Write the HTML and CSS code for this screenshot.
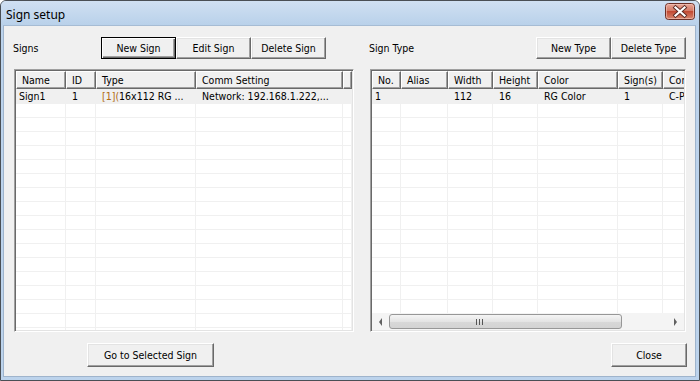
FILE: index.html
```html
<!DOCTYPE html>
<html lang="en">
<head>
  <meta charset="UTF-8" />
  <title>Sign setup</title>
  <link rel="stylesheet" href="styles.css">
</head>
<body>
  <div class="window">
    <div class="titlebar">
      <span class="title">Sign setup</span>
      <span class="close-btn">
        <svg width="30" height="17" viewBox="0 0 30 17">
          <defs>
            <linearGradient id="redFace" x1="0" y1="0" x2="0" y2="1">
              <stop offset="0" stop-color="#e9a99a"/>
              <stop offset="0.45" stop-color="#d47a66"/>
              <stop offset="0.5" stop-color="#c24a33"/>
              <stop offset="1" stop-color="#d98a72"/>
            </linearGradient>
          </defs>
          <rect x="0.5" y="0.5" width="29" height="16" rx="3" fill="url(#redFace)" stroke="#6b2f26"/>
          <rect x="1.5" y="1.5" width="27" height="14" rx="2" fill="none" stroke="#f3c9bf" stroke-opacity="0.6"/>
          <path d="M10.5 4.5 L19.5 12.5 M19.5 4.5 L10.5 12.5" stroke="#5a2a24" stroke-width="4" stroke-linecap="square"/>
          <path d="M10.5 4.5 L19.5 12.5 M19.5 4.5 L10.5 12.5" stroke="#fff" stroke-width="2.2" stroke-linecap="square"/>
        </svg>
      </span>
    </div>

    <div class="client">
      <section class="panel">
        <div class="toolbar">
          <span class="label label-signs">Signs</span>
          <button class="btn btn-default">New Sign</button>
          <button class="btn">Edit Sign</button>
          <button class="btn">Delete Sign</button>
        </div>
        <div class="listview">
          <div class="list-body">
            <table class="grid grid-signs">
              <colgroup>
                <col style="width:50px"><col style="width:30px"><col style="width:100px"><col style="width:147px"><col style="width:9px">
              </colgroup>
              <thead>
                <tr><th>Name</th><th>ID</th><th>Type</th><th>Comm Setting</th><th class="filler"></th></tr>
              </thead>
              <tbody id="signRows">
                <tr class="selected"><td class="first">Sign1</td><td>1</td><td><span class="tag">[1](</span>16x112 RG ...</td><td>Network: 192.168.1.222,...</td><td></td></tr>
              </tbody>
            </table>
          </div>
        </div>
        <div class="footer footer-left">
          <button class="btn btn-wide">Go to Selected Sign</button>
        </div>
      </section>

      <section class="panel">
        <div class="toolbar">
          <span class="label label-grow">Sign Type</span>
          <button class="btn">New Type</button>
          <button class="btn">Delete Type</button>
        </div>
        <div class="listview">
          <div class="list-body">
            <table class="grid grid-types">
              <colgroup>
                <col style="width:29px"><col style="width:47px"><col style="width:45px"><col style="width:45px"><col style="width:80px"><col style="width:45px"><col style="width:60px">
              </colgroup>
              <thead>
                <tr><th>No.</th><th>Alias</th><th>Width</th><th>Height</th><th>Color</th><th>Sign(s)</th><th>Comm</th></tr>
              </thead>
              <tbody id="typeRows">
                <tr class="selected"><td class="first">1</td><td></td><td>112</td><td>16</td><td>RG Color</td><td>1</td><td>C-Power</td></tr>
              </tbody>
            </table>
          </div>
          <div class="hscroll">
            <span class="arrow arrow-left"></span>
            <span class="track">
              <span class="thumb"><span class="grip"></span></span>
            </span>
            <span class="arrow arrow-right"></span>
          </div>
        </div>
        <div class="footer footer-right">
          <button class="btn btn-close">Close</button>
        </div>
      </section>
    </div>
  </div>

  <script>
    // pad both lists with empty grid rows
    function fillRows(id, cols, count) {
      const body = document.getElementById(id);
      for (let i = 0; i < count; i++) {
        const tr = document.createElement('tr');
        for (let c = 0; c < cols; c++) tr.appendChild(document.createElement('td'));
        body.appendChild(tr);
      }
    }
    fillRows('signRows', 5, 17);
    fillRows('typeRows', 7, 17);
  </script>
</body>
</html>
```

FILE: styles.css
```css
* {
  box-sizing: border-box;
  margin: 0;
  padding: 0;
}

body {
  width: 700px;
  height: 381px;
  overflow: hidden;
  background: #fff;
  font-family: "DejaVu Sans Condensed", "DejaVu Sans", sans-serif;
  font-stretch: condensed;
  font-size: 10.5px;
  color: #000;
}

.window {
  width: 700px;
  height: 381px;
  display: flex;
  flex-direction: column;
  border: 1px solid #4a4f55;
  border-radius: 6px 6px 0 0;
  background: #bcd3ec;
  padding: 0 3px 3px 2px;
}

.titlebar {
  height: 24px;
  display: flex;
  align-items: center;
  justify-content: space-between;
  padding: 0 4px 0 5px;
  margin: 0 -3px 0 -2px;
  border-radius: 5px 5px 0 0;
  background: linear-gradient(to bottom, #d0e0f2, #b9d1ea);
}

.title {
  font-family: "Noto Sans", "Open Sans", sans-serif;
  font-stretch: normal;
  font-size: 12px;
  color: #000;
  padding-top: 2px;
}

.close-btn {
  display: flex;
  margin-top: -4px;
}

.client {
  flex: 1;
  background: #f0f0f0;
  border: 1px solid #9fb4cc;
  border-top-color: #a6bcd4;
  display: grid;
  grid-template-columns: 340px 316px;
  column-gap: 16px;
  padding: 11px 0 0 10px;
}

.panel {
  display: flex;
  flex-direction: column;
}

.toolbar {
  height: 22px;
  display: flex;
  align-items: center;
  margin-bottom: 10px;
}

.label {
  margin-left: -1px;
}

.label-signs {
  width: 88px;
}

.label-grow {
  flex: 1;
}

.btn {
  font: inherit;
  width: 75px;
  height: 22px;
  background: #f0f0f0;
  color: #000;
  border: 1px solid;
  border-color: #fff #696969 #696969 #fff;
  box-shadow: inset -1px -1px #a0a0a0, inset 1px 1px #e3e3e3;
}

.btn-default {
  border-color: #000;
  box-shadow: inset 1px 1px #fff, inset -1px -1px #696969, inset -2px -2px #a0a0a0;
}

.listview {
  height: 263px;
  display: flex;
  flex-direction: column;
  background: #fff;
  border: 1px solid;
  border-color: #a0a0a0 #fff #fff #a0a0a0;
  box-shadow: inset 1px 1px #696969, inset -1px -1px #e3e3e3;
  padding: 1px 1px 1px 1px;
}

.list-body {
  flex: 1;
  overflow: hidden;
}

.grid {
  table-layout: fixed;
  border-collapse: separate;
  border-spacing: 0;
}

.grid-signs {
  width: 336px;
}

.grid-types {
  width: 351px;
}

.grid th {
  height: 18px;
  text-align: left;
  font-weight: normal;
  padding: 0 0 0 5px;
  background: #f0f0f0;
  border-top: 1px solid #fff;
  border-left: 1px solid #fff;
  border-right: 1px solid #696969;
  border-bottom: 1px solid #696969;
  box-shadow: inset -1px -1px #a0a0a0;
  white-space: nowrap;
  overflow: hidden;
}

.grid td {
  height: 14px;
  padding: 0 0 0 6px;
  border-right: 1px solid #f0f0f0;
  border-bottom: 1px solid #f0f0f0;
  white-space: nowrap;
  overflow: hidden;
  line-height: 13px;
}

.grid td.first {
  padding-left: 3px;
}

.grid tr.selected td {
  height: 15px;
  padding-top: 1px;
  background: #f0f0f0;
  border-right-color: #f0f0f0;
}

.grid tr.selected td.first {
  padding-left: 3px;
}

.tag {
  color: #b06a10;
}

.hscroll {
  height: 17px;
  display: flex;
  background: #f4f4f4;
}

.arrow {
  width: 17px;
  display: flex;
  align-items: center;
  justify-content: center;
}

.arrow-left::before,
.arrow-right::before {
  content: "";
  border-top: 4px solid transparent;
  border-bottom: 4px solid transparent;
}

.arrow-left::before {
  border-right: 3px solid #606060;
}

.arrow-right::before {
  border-left: 3px solid #606060;
}

.track {
  flex: 1;
  display: flex;
  align-items: center;
}

.thumb {
  width: 233px;
  height: 15px;
  display: flex;
  align-items: center;
  padding-left: 86px;
  border: 1px solid #979797;
  border-radius: 3px;
  background: linear-gradient(to bottom, #f5f5f5, #e4e4e4 50%, #d8d8d8 51%, #d3d3d3);
}

.grip {
  width: 7px;
  height: 6px;
  background: repeating-linear-gradient(to right, #555 0 1px, transparent 1px 3px);
}

.footer {
  display: flex;
  margin-top: 11px;
}

.footer-left {
  padding-left: 73px;
}

.footer-right {
  justify-content: flex-end;
  margin-right: -1px;
}

.btn-wide {
  width: 127px;
  height: 24px;
}

.btn-close {
  width: 76px;
  height: 24px;
}
```
